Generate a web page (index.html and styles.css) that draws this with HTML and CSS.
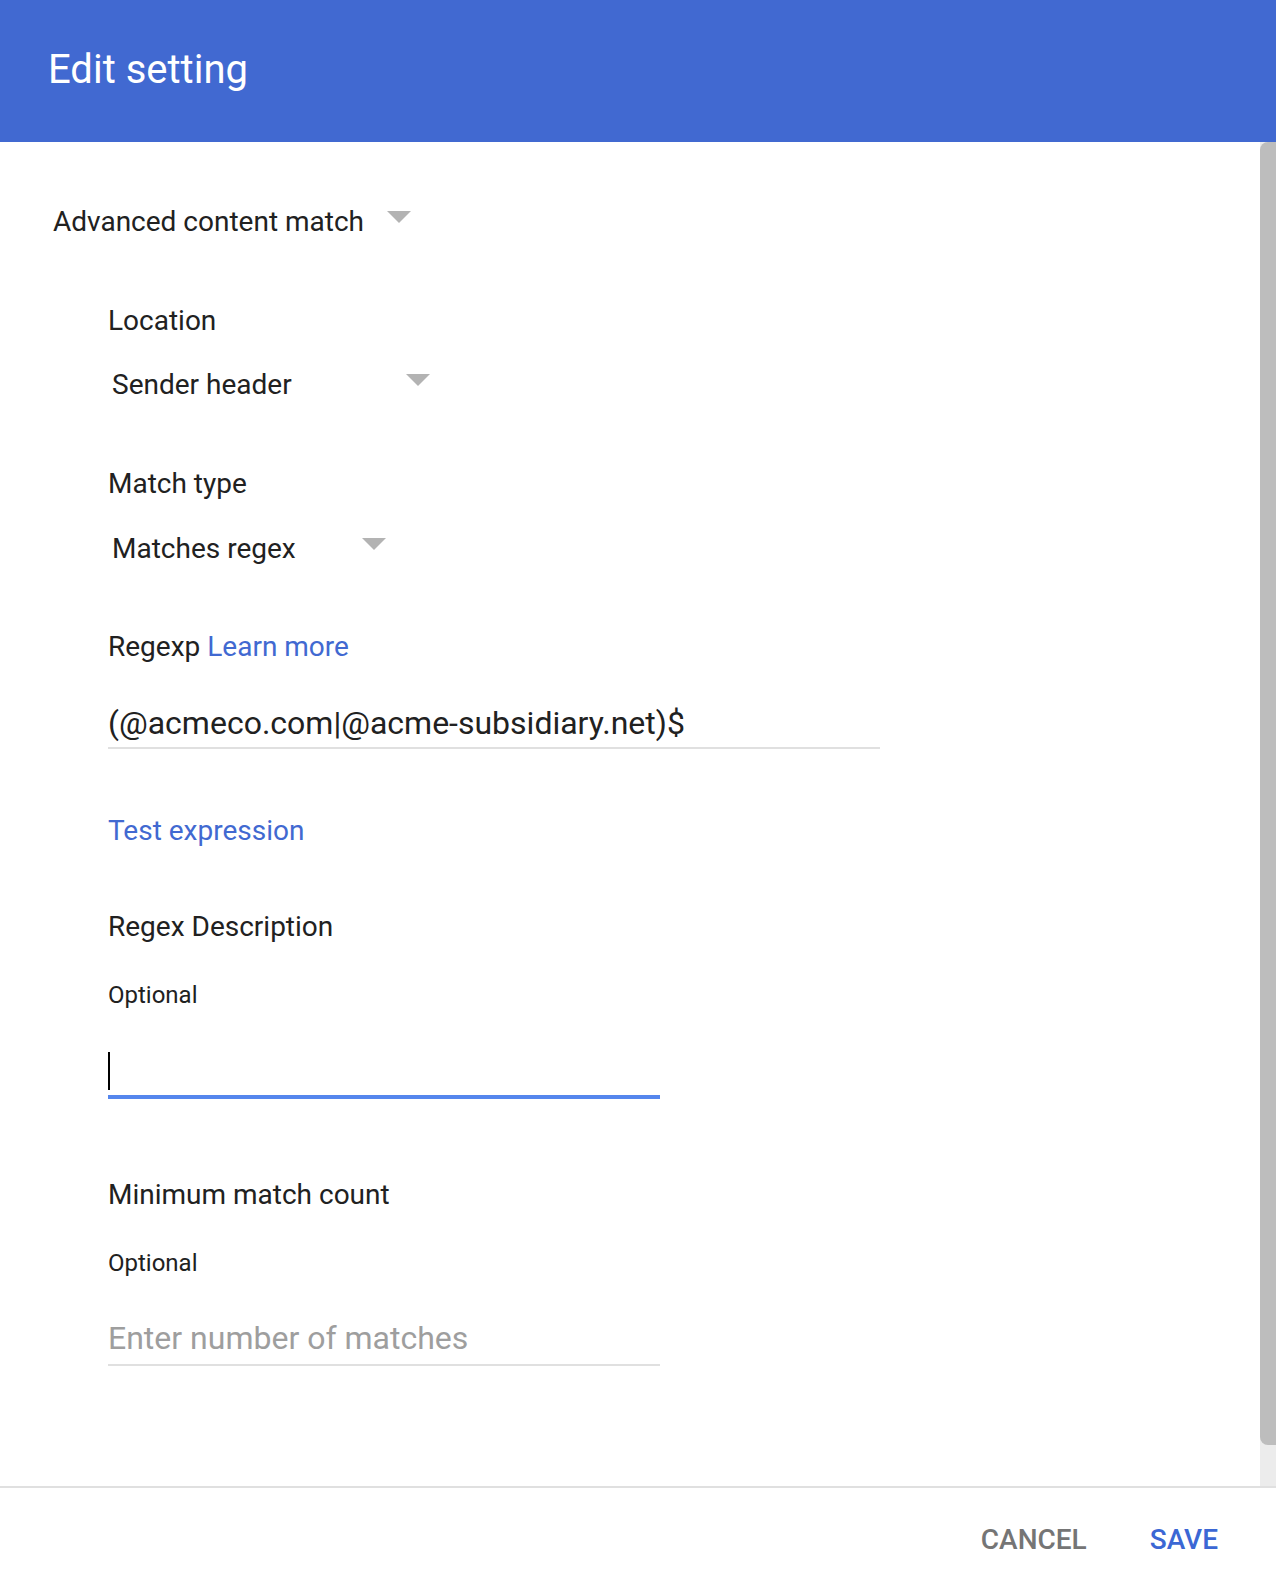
FILE: index.html
```html
<!DOCTYPE html>
<html lang="en">
<head>
<meta charset="utf-8">
<title>Edit setting</title>
<link rel="stylesheet" href="styles.css">
</head>
<body>
<div class="dialog">
  <header class="dialog-header">
    <h1 class="dialog-title">Edit setting</h1>
  </header>
  <div class="dialog-body">
    <div class="content">
      <div class="dropdown dd-top">
        <span class="dd-text">Advanced content match</span>
        <span class="dd-arrow"></span>
      </div>
      <div class="section">
        <div class="label label-location">Location</div>
        <div class="dropdown dd-sender">
          <span class="dd-text">Sender header</span>
          <span class="dd-arrow"></span>
        </div>
        <div class="label label-match">Match type</div>
        <div class="dropdown dd-match">
          <span class="dd-text">Matches regex</span>
          <span class="dd-arrow"></span>
        </div>
        <div class="label label-regexp">Regexp <a class="link" href="#">Learn more</a></div>
        <div class="field field-regex">(@acmeco.com|@acme-subsidiary.net)$</div>
        <a class="link test-link" href="#">Test expression</a>
        <div class="label label-desc">Regex Description</div>
        <div class="hint hint-desc">Optional</div>
        <div class="field field-focused"><span class="caret"></span></div>
        <div class="label label-min">Minimum match count</div>
        <div class="hint hint-min">Optional</div>
        <div class="field field-count placeholder">Enter number of matches</div>
      </div>
    </div>
    <div class="scrollbar"><div class="scroll-thumb"></div></div>
  </div>
  <footer class="dialog-footer">
    <button class="btn btn-cancel" type="button">CANCEL</button>
    <button class="btn btn-save" type="button">SAVE</button>
  </footer>
</div>
</body>
</html>
```

FILE: styles.css
```css
* { box-sizing: border-box; }

html, body {
  margin: 0;
  padding: 0;
  background: #ffffff;
}

body {
  font-family: Roboto, "Liberation Sans", Arial, sans-serif;
  color: #212121;
}

.dialog {
  width: 1276px;
  height: 1592px;
  display: flex;
  flex-direction: column;
}

.dialog-header {
  height: 142px;
  background: #4169d1;
  padding: 48px 0 0 48px;
  flex: none;
}

.dialog-title {
  margin: 0;
  font-size: 40px;
  font-weight: 400;
  line-height: 44px;
  color: #ffffff;
}

.dialog-body {
  flex: 1;
  display: flex;
  min-height: 0;
}

.content {
  flex: 1;
  padding: 60px 0 0 53px;
}

.dropdown {
  display: flex;
  justify-content: space-between;
  align-items: flex-start;
  font-size: 28px;
  line-height: 40px;
}

.dd-arrow {
  width: 0;
  height: 0;
  border-left: 12px solid transparent;
  border-right: 12px solid transparent;
  border-top: 12px solid #b3b3b3;
  margin-top: 9px;
}

.dd-top { width: 358px; }

.section {
  padding-left: 55px;
}

.dd-sender {
  width: 322px;
  padding-left: 4px;
  margin-top: 24px;
}

.dd-match {
  width: 278px;
  padding-left: 4px;
  margin-top: 25px;
}

.label {
  font-size: 28px;
  line-height: 40px;
}

.label-location { margin-top: 59px; }
.label-match { margin-top: 59px; }
.label-regexp { margin-top: 58px; }
.label-desc { margin-top: 56px; }
.label-min { margin-top: 76px; }

.link {
  color: #4169d1;
  text-decoration: none;
}

.test-link {
  display: block;
  width: max-content;
  font-size: 28px;
  line-height: 40px;
  margin-top: 62px;
}

.hint {
  font-size: 24px;
  line-height: 32px;
}

.hint-desc { margin-top: 32px; }
.hint-min { margin-top: 32px; }

.field {
  font-size: 32px;
  line-height: 40px;
  padding-bottom: 4px;
  border-bottom: 2px solid #e0e0e0;
}

.field-regex {
  width: 772px;
  margin-top: 36px;
  padding-bottom: 4px;
}

.field-focused {
  width: 552px;
  height: 48px;
  margin-top: 40px;
  padding-top: 1px;
  border-bottom: 4px solid #5586ed;
}

.caret {
  display: block;
  width: 2px;
  height: 38px;
  background: #000000;
}

.field-count {
  width: 552px;
  margin-top: 39px;
  padding-bottom: 6px;
}

.placeholder {
  color: #9e9e9e;
}

.scrollbar {
  width: 16px;
  flex: none;
  background: #ececec;
}

.scroll-thumb {
  height: 1303px;
  background: #bdbdbd;
  border-radius: 8px 0 0 8px;
}

.dialog-footer {
  flex: none;
  height: 106px;
  border-top: 2px solid #e0e0e0;
  display: flex;
  justify-content: flex-end;
  align-items: center;
  gap: 63px;
  padding: 0 58px 0 0;
}

.btn {
  border: none;
  background: none;
  padding: 0;
  font-family: Roboto, "Liberation Sans", Arial, sans-serif;
  font-size: 28px;
  font-weight: 500;
  line-height: 40px;
  cursor: pointer;
}

.btn-cancel { color: #757575; }
.btn-save { color: #3b67d4; }
```
